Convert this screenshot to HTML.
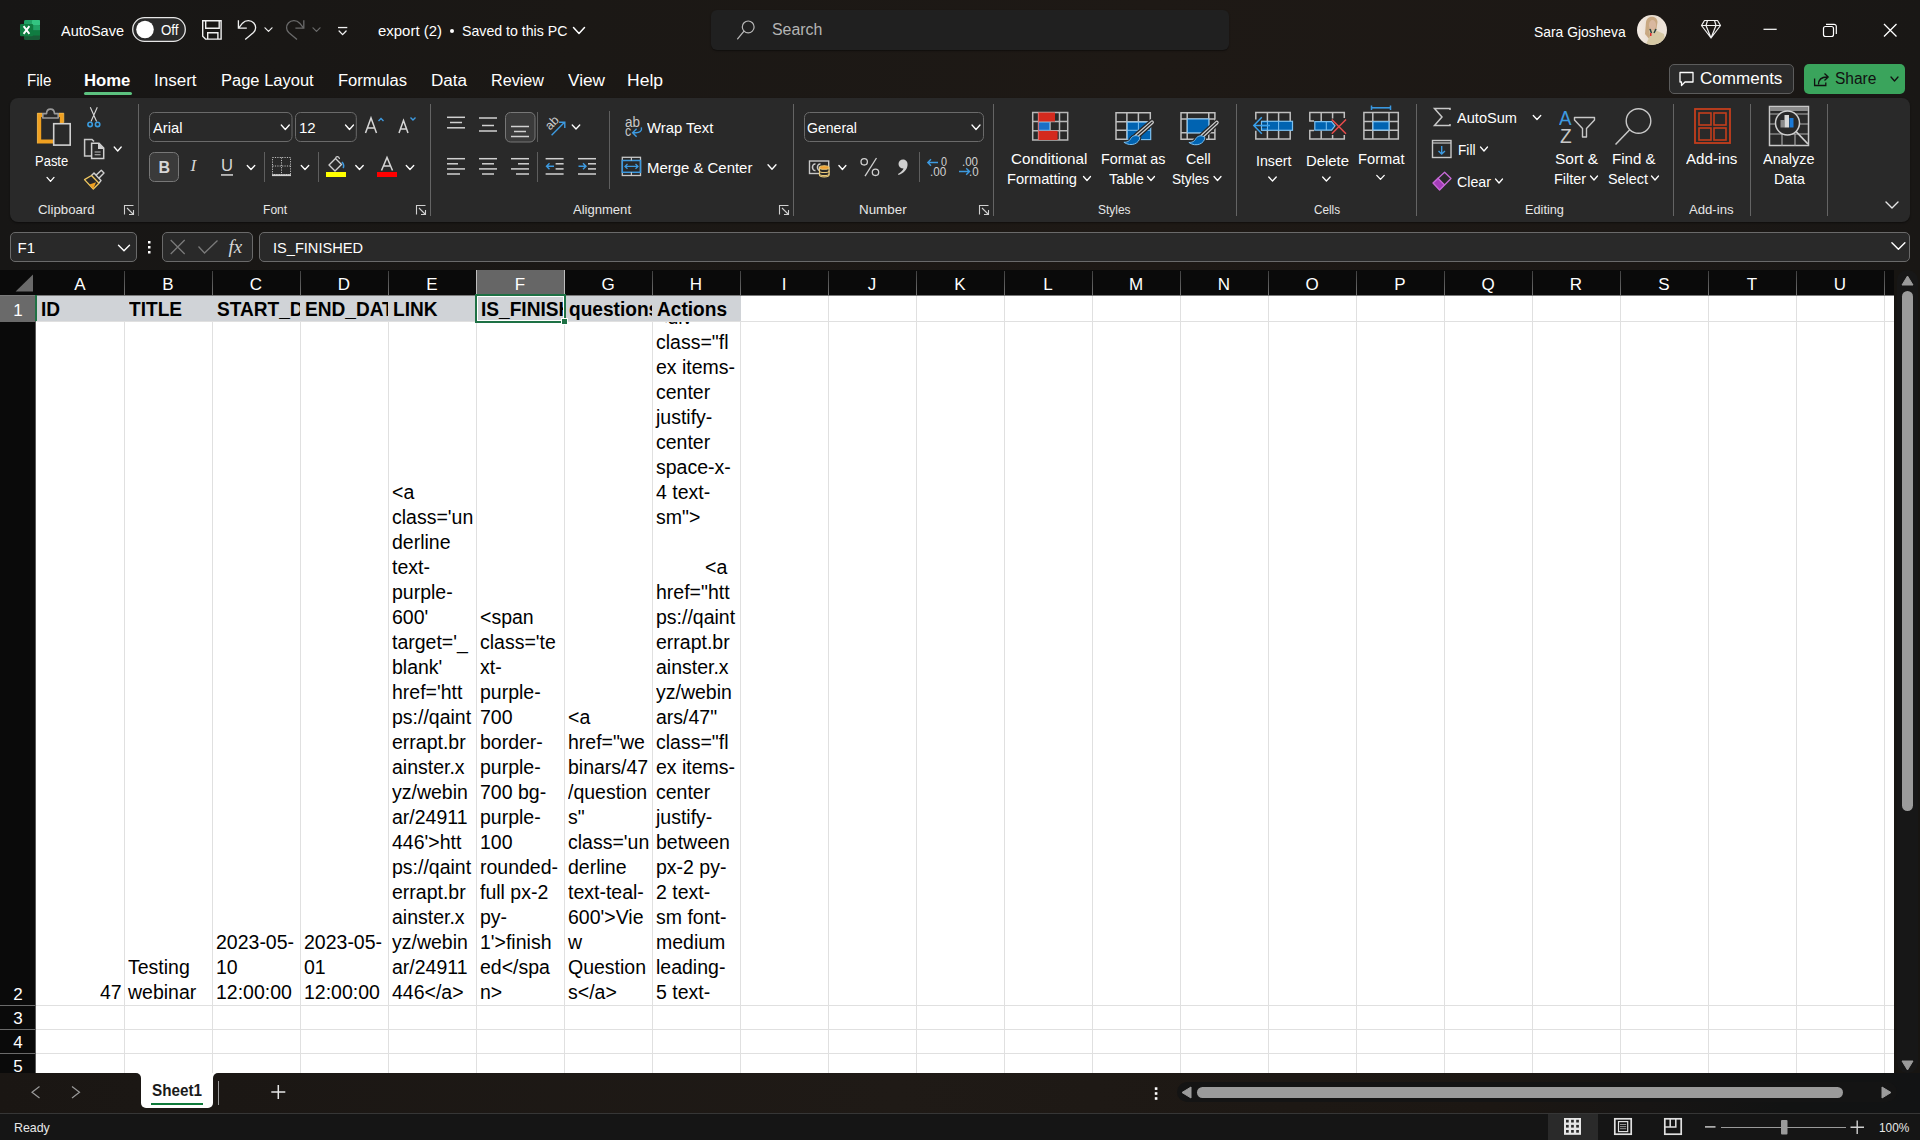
<!DOCTYPE html>
<html><head><meta charset="utf-8"><title>Excel</title><style>
*{margin:0;padding:0;box-sizing:border-box}
html,body{width:1920px;height:1140px;overflow:hidden;background:#1b1714;font-family:"Liberation Sans",sans-serif;position:relative}
.t{position:absolute;white-space:pre;line-height:1;transform-origin:0 0}
.r{position:absolute}
.s{position:absolute;overflow:visible}
</style></head><body>
<div class="r" style="left:0px;top:0px;width:1920px;height:270px;background:linear-gradient(90deg,#171615 0%,#1b1815 30%,#1e1915 60%,#1c1815 85%,#191715 100%);"></div>
<div class="r" style="left:711px;top:10px;width:518px;height:40px;background:#202020;border-radius:6px;box-shadow:0 1px 1.5px rgba(0,0,0,0.45);"></div>
<div class="r" style="left:1669px;top:64px;width:125px;height:30px;background:#2b2b2b;border:1px solid #5c5c5c;border-radius:5px;"></div>
<div class="r" style="left:1804px;top:64px;width:101px;height:30px;background:#3aa45c;border-radius:5px;"></div>
<div class="r" style="left:10px;top:98px;width:1900px;height:124px;background:#292929;border-radius:8px;box-shadow:0 1px 2px rgba(0,0,0,0.45);"></div>
<div class="r" style="left:10px;top:232px;width:127px;height:30px;background:#292929;border:1px solid #6a6a6a;border-radius:5px;"></div>
<div class="r" style="left:162px;top:232px;width:91px;height:30px;background:#292929;border:1px solid #6a6a6a;border-radius:5px;"></div>
<div class="r" style="left:259px;top:232px;width:1651px;height:30px;background:#292929;border:1px solid #6a6a6a;border-radius:5px;"></div>
<div class="r" style="left:0px;top:270px;width:1894px;height:25px;background:#0a0a0a;"></div>
<div class="r" style="left:36px;top:295px;width:1858px;height:778px;background:#ffffff;"></div>
<div class="r" style="left:0px;top:295px;width:36px;height:778px;background:#0a0a0a;"></div>
<div class="r" style="left:36px;top:295px;width:704px;height:26px;background:#d0d3d7;"></div>
<div class="r" style="left:476px;top:270px;width:88px;height:25px;background:#666666;"></div>
<div class="r" style="left:0px;top:295px;width:36px;height:26px;background:#6a6a6a;"></div>
<svg class="s" style="left:0;top:0" width="1920" height="1140"><defs><linearGradient id="hsep" x1="0" y1="0" x2="0" y2="1"><stop offset="0" stop-color="#404040"/><stop offset="1" stop-color="#707070"/></linearGradient></defs><rect x="124" y="271" width="1" height="24" fill="url(#hsep)"/><rect x="124" y="295" width="1" height="778" fill="#e0e0e0"/><rect x="212" y="271" width="1" height="24" fill="url(#hsep)"/><rect x="212" y="295" width="1" height="778" fill="#e0e0e0"/><rect x="300" y="271" width="1" height="24" fill="url(#hsep)"/><rect x="300" y="295" width="1" height="778" fill="#e0e0e0"/><rect x="388" y="271" width="1" height="24" fill="url(#hsep)"/><rect x="388" y="295" width="1" height="778" fill="#e0e0e0"/><rect x="476" y="271" width="1" height="24" fill="url(#hsep)"/><rect x="476" y="295" width="1" height="778" fill="#e0e0e0"/><rect x="564" y="271" width="1" height="24" fill="url(#hsep)"/><rect x="564" y="295" width="1" height="778" fill="#e0e0e0"/><rect x="652" y="271" width="1" height="24" fill="url(#hsep)"/><rect x="652" y="295" width="1" height="778" fill="#e0e0e0"/><rect x="740" y="271" width="1" height="24" fill="url(#hsep)"/><rect x="740" y="295" width="1" height="778" fill="#e0e0e0"/><rect x="828" y="271" width="1" height="24" fill="url(#hsep)"/><rect x="828" y="295" width="1" height="778" fill="#e0e0e0"/><rect x="916" y="271" width="1" height="24" fill="url(#hsep)"/><rect x="916" y="295" width="1" height="778" fill="#e0e0e0"/><rect x="1004" y="271" width="1" height="24" fill="url(#hsep)"/><rect x="1004" y="295" width="1" height="778" fill="#e0e0e0"/><rect x="1092" y="271" width="1" height="24" fill="url(#hsep)"/><rect x="1092" y="295" width="1" height="778" fill="#e0e0e0"/><rect x="1180" y="271" width="1" height="24" fill="url(#hsep)"/><rect x="1180" y="295" width="1" height="778" fill="#e0e0e0"/><rect x="1268" y="271" width="1" height="24" fill="url(#hsep)"/><rect x="1268" y="295" width="1" height="778" fill="#e0e0e0"/><rect x="1356" y="271" width="1" height="24" fill="url(#hsep)"/><rect x="1356" y="295" width="1" height="778" fill="#e0e0e0"/><rect x="1444" y="271" width="1" height="24" fill="url(#hsep)"/><rect x="1444" y="295" width="1" height="778" fill="#e0e0e0"/><rect x="1532" y="271" width="1" height="24" fill="url(#hsep)"/><rect x="1532" y="295" width="1" height="778" fill="#e0e0e0"/><rect x="1620" y="271" width="1" height="24" fill="url(#hsep)"/><rect x="1620" y="295" width="1" height="778" fill="#e0e0e0"/><rect x="1708" y="271" width="1" height="24" fill="url(#hsep)"/><rect x="1708" y="295" width="1" height="778" fill="#e0e0e0"/><rect x="1796" y="271" width="1" height="24" fill="url(#hsep)"/><rect x="1796" y="295" width="1" height="778" fill="#e0e0e0"/><rect x="1884" y="271" width="1" height="24" fill="url(#hsep)"/><rect x="1884" y="295" width="1" height="778" fill="#e0e0e0"/><rect x="36" y="321" width="1858" height="1" fill="#e0e0e0"/><rect x="0" y="321" width="36" height="1" fill="#6a6a6a"/><rect x="36" y="1005" width="1858" height="1" fill="#e0e0e0"/><rect x="0" y="1005" width="36" height="1" fill="#6a6a6a"/><rect x="36" y="1029" width="1858" height="1" fill="#e0e0e0"/><rect x="0" y="1029" width="36" height="1" fill="#6a6a6a"/><rect x="36" y="1053" width="1858" height="1" fill="#e0e0e0"/><rect x="0" y="1053" width="36" height="1" fill="#6a6a6a"/><rect x="35" y="295" width="1" height="778" fill="#5a5a5a"/><rect x="0" y="295" width="1894" height="1" fill="#7a7a7a"/></svg>
<div class="r" style="left:36px;top:296px;width:704.5px;height:25px;background:#d0d3d7;"></div>
<div class="t" style="left:74.33px;top:275.61px;font-size:17px;color:#ffffff;">A</div>
<div class="t" style="left:162.33px;top:275.61px;font-size:17px;color:#ffffff;">B</div>
<div class="t" style="left:249.86px;top:275.61px;font-size:17px;color:#ffffff;">C</div>
<div class="t" style="left:337.86px;top:275.61px;font-size:17px;color:#ffffff;">D</div>
<div class="t" style="left:426.33px;top:275.61px;font-size:17px;color:#ffffff;">E</div>
<div class="t" style="left:514.81px;top:275.61px;font-size:17px;color:#ffffff;">F</div>
<div class="t" style="left:601.39px;top:275.61px;font-size:17px;color:#ffffff;">G</div>
<div class="t" style="left:689.86px;top:275.61px;font-size:17px;color:#ffffff;">H</div>
<div class="t" style="left:781.64px;top:275.61px;font-size:17px;color:#ffffff;">I</div>
<div class="t" style="left:867.75px;top:275.61px;font-size:17px;color:#ffffff;">J</div>
<div class="t" style="left:954.33px;top:275.61px;font-size:17px;color:#ffffff;">K</div>
<div class="t" style="left:1043.27px;top:275.61px;font-size:17px;color:#ffffff;">L</div>
<div class="t" style="left:1128.92px;top:275.61px;font-size:17px;color:#ffffff;">M</div>
<div class="t" style="left:1217.86px;top:275.61px;font-size:17px;color:#ffffff;">N</div>
<div class="t" style="left:1305.39px;top:275.61px;font-size:17px;color:#ffffff;">O</div>
<div class="t" style="left:1394.33px;top:275.61px;font-size:17px;color:#ffffff;">P</div>
<div class="t" style="left:1481.39px;top:275.61px;font-size:17px;color:#ffffff;">Q</div>
<div class="t" style="left:1569.86px;top:275.61px;font-size:17px;color:#ffffff;">R</div>
<div class="t" style="left:1658.33px;top:275.61px;font-size:17px;color:#ffffff;">S</div>
<div class="t" style="left:1746.81px;top:275.61px;font-size:17px;color:#ffffff;">T</div>
<div class="t" style="left:1833.86px;top:275.61px;font-size:17px;color:#ffffff;">U</div>
<div class="t" style="left:13.27px;top:302.11px;font-size:17px;color:#ffffff;">1</div>
<div class="t" style="left:13.27px;top:985.61px;font-size:17px;color:#ffffff;">2</div>
<div class="t" style="left:13.27px;top:1009.61px;font-size:17px;color:#ffffff;">3</div>
<div class="t" style="left:13.27px;top:1033.61px;font-size:17px;color:#ffffff;">4</div>
<div class="t" style="left:13.27px;top:1057.61px;font-size:17px;color:#ffffff;">5</div>
<div style="position:absolute;left:37px;top:295px;width:87px;height:26px;overflow:hidden"><div class="t" style="left:3.50px;top:3.87px;font-size:20px;color:#000;font-weight:bold;transform:scaleX(0.9550);">ID</div></div>
<div style="position:absolute;left:125px;top:295px;width:87px;height:26px;overflow:hidden"><div class="t" style="left:3.50px;top:3.87px;font-size:20px;color:#000;font-weight:bold;transform:scaleX(0.9550);">TITLE</div></div>
<div style="position:absolute;left:213px;top:295px;width:87px;height:26px;overflow:hidden"><div class="t" style="left:3.50px;top:3.87px;font-size:20px;color:#000;font-weight:bold;transform:scaleX(0.9550);">START_DATE</div></div>
<div style="position:absolute;left:301px;top:295px;width:87px;height:26px;overflow:hidden"><div class="t" style="left:3.50px;top:3.87px;font-size:20px;color:#000;font-weight:bold;transform:scaleX(0.9550);">END_DATE</div></div>
<div style="position:absolute;left:389px;top:295px;width:87px;height:26px;overflow:hidden"><div class="t" style="left:3.50px;top:3.87px;font-size:20px;color:#000;font-weight:bold;transform:scaleX(0.9550);">LINK</div></div>
<div style="position:absolute;left:477px;top:295px;width:87px;height:26px;overflow:hidden"><div class="t" style="left:3.50px;top:3.87px;font-size:20px;color:#000;font-weight:bold;transform:scaleX(0.9550);">IS_FINISHED</div></div>
<div style="position:absolute;left:565px;top:295px;width:87px;height:26px;overflow:hidden"><div class="t" style="left:3.50px;top:3.87px;font-size:20px;color:#000;font-weight:bold;transform:scaleX(0.9550);">questions</div></div>
<div style="position:absolute;left:653px;top:295px;width:87px;height:26px;overflow:hidden"><div class="t" style="left:3.50px;top:3.87px;font-size:20px;color:#000;font-weight:bold;transform:scaleX(0.9550);">Actions</div></div>
<div style="position:absolute;left:37px;top:322px;width:87px;height:683px;overflow:hidden"><div class="t" style="left:62.61px;top:659.77px;font-size:20px;color:#000;transform:scaleX(0.9750);">47</div></div>
<div style="position:absolute;left:125px;top:322px;width:87px;height:683px;overflow:hidden"><div class="t" style="left:3.00px;top:634.77px;font-size:20px;color:#000;transform:scaleX(0.9750);">Testing</div><div class="t" style="left:3.00px;top:659.77px;font-size:20px;color:#000;transform:scaleX(0.9750);">webinar</div></div>
<div style="position:absolute;left:213px;top:322px;width:87px;height:683px;overflow:hidden"><div class="t" style="left:3.00px;top:609.77px;font-size:20px;color:#000;transform:scaleX(0.9750);">2023-05-</div><div class="t" style="left:3.00px;top:634.77px;font-size:20px;color:#000;transform:scaleX(0.9750);">10</div><div class="t" style="left:3.00px;top:659.77px;font-size:20px;color:#000;transform:scaleX(0.9750);">12:00:00</div></div>
<div style="position:absolute;left:301px;top:322px;width:87px;height:683px;overflow:hidden"><div class="t" style="left:3.00px;top:609.77px;font-size:20px;color:#000;transform:scaleX(0.9750);">2023-05-</div><div class="t" style="left:3.00px;top:634.77px;font-size:20px;color:#000;transform:scaleX(0.9750);">01</div><div class="t" style="left:3.00px;top:659.77px;font-size:20px;color:#000;transform:scaleX(0.9750);">12:00:00</div></div>
<div style="position:absolute;left:389px;top:322px;width:87px;height:683px;overflow:hidden"><div class="t" style="left:3.00px;top:159.77px;font-size:20px;color:#000;transform:scaleX(0.9750);">&lt;a</div><div class="t" style="left:3.00px;top:184.77px;font-size:20px;color:#000;transform:scaleX(0.9750);">class=&#x27;un</div><div class="t" style="left:3.00px;top:209.77px;font-size:20px;color:#000;transform:scaleX(0.9750);">derline</div><div class="t" style="left:3.00px;top:234.77px;font-size:20px;color:#000;transform:scaleX(0.9750);">text-</div><div class="t" style="left:3.00px;top:259.77px;font-size:20px;color:#000;transform:scaleX(0.9750);">purple-</div><div class="t" style="left:3.00px;top:284.77px;font-size:20px;color:#000;transform:scaleX(0.9750);">600&#x27;</div><div class="t" style="left:3.00px;top:309.77px;font-size:20px;color:#000;transform:scaleX(0.9750);">target=&#x27;_</div><div class="t" style="left:3.00px;top:334.77px;font-size:20px;color:#000;transform:scaleX(0.9750);">blank&#x27;</div><div class="t" style="left:3.00px;top:359.77px;font-size:20px;color:#000;transform:scaleX(0.9750);">href=&#x27;htt</div><div class="t" style="left:3.00px;top:384.77px;font-size:20px;color:#000;transform:scaleX(0.9750);">ps://qaint</div><div class="t" style="left:3.00px;top:409.77px;font-size:20px;color:#000;transform:scaleX(0.9750);">errapt.br</div><div class="t" style="left:3.00px;top:434.77px;font-size:20px;color:#000;transform:scaleX(0.9750);">ainster.x</div><div class="t" style="left:3.00px;top:459.77px;font-size:20px;color:#000;transform:scaleX(0.9750);">yz/webin</div><div class="t" style="left:3.00px;top:484.77px;font-size:20px;color:#000;transform:scaleX(0.9750);">ar/24911</div><div class="t" style="left:3.00px;top:509.77px;font-size:20px;color:#000;transform:scaleX(0.9750);">446&#x27;&gt;htt</div><div class="t" style="left:3.00px;top:534.77px;font-size:20px;color:#000;transform:scaleX(0.9750);">ps://qaint</div><div class="t" style="left:3.00px;top:559.77px;font-size:20px;color:#000;transform:scaleX(0.9750);">errapt.br</div><div class="t" style="left:3.00px;top:584.77px;font-size:20px;color:#000;transform:scaleX(0.9750);">ainster.x</div><div class="t" style="left:3.00px;top:609.77px;font-size:20px;color:#000;transform:scaleX(0.9750);">yz/webin</div><div class="t" style="left:3.00px;top:634.77px;font-size:20px;color:#000;transform:scaleX(0.9750);">ar/24911</div><div class="t" style="left:3.00px;top:659.77px;font-size:20px;color:#000;transform:scaleX(0.9750);">446&lt;/a&gt;</div></div>
<div style="position:absolute;left:477px;top:322px;width:87px;height:683px;overflow:hidden"><div class="t" style="left:3.00px;top:284.77px;font-size:20px;color:#000;transform:scaleX(0.9750);">&lt;span</div><div class="t" style="left:3.00px;top:309.77px;font-size:20px;color:#000;transform:scaleX(0.9750);">class=&#x27;te</div><div class="t" style="left:3.00px;top:334.77px;font-size:20px;color:#000;transform:scaleX(0.9750);">xt-</div><div class="t" style="left:3.00px;top:359.77px;font-size:20px;color:#000;transform:scaleX(0.9750);">purple-</div><div class="t" style="left:3.00px;top:384.77px;font-size:20px;color:#000;transform:scaleX(0.9750);">700</div><div class="t" style="left:3.00px;top:409.77px;font-size:20px;color:#000;transform:scaleX(0.9750);">border-</div><div class="t" style="left:3.00px;top:434.77px;font-size:20px;color:#000;transform:scaleX(0.9750);">purple-</div><div class="t" style="left:3.00px;top:459.77px;font-size:20px;color:#000;transform:scaleX(0.9750);">700 bg-</div><div class="t" style="left:3.00px;top:484.77px;font-size:20px;color:#000;transform:scaleX(0.9750);">purple-</div><div class="t" style="left:3.00px;top:509.77px;font-size:20px;color:#000;transform:scaleX(0.9750);">100</div><div class="t" style="left:3.00px;top:534.77px;font-size:20px;color:#000;transform:scaleX(0.9750);">rounded-</div><div class="t" style="left:3.00px;top:559.77px;font-size:20px;color:#000;transform:scaleX(0.9750);">full px-2</div><div class="t" style="left:3.00px;top:584.77px;font-size:20px;color:#000;transform:scaleX(0.9750);">py-</div><div class="t" style="left:3.00px;top:609.77px;font-size:20px;color:#000;transform:scaleX(0.9750);">1&#x27;&gt;finish</div><div class="t" style="left:3.00px;top:634.77px;font-size:20px;color:#000;transform:scaleX(0.9750);">ed&lt;/spa</div><div class="t" style="left:3.00px;top:659.77px;font-size:20px;color:#000;transform:scaleX(0.9750);">n&gt;</div></div>
<div style="position:absolute;left:565px;top:322px;width:87px;height:683px;overflow:hidden"><div class="t" style="left:3.00px;top:384.77px;font-size:20px;color:#000;transform:scaleX(0.9750);">&lt;a</div><div class="t" style="left:3.00px;top:409.77px;font-size:20px;color:#000;transform:scaleX(0.9750);">href=&quot;we</div><div class="t" style="left:3.00px;top:434.77px;font-size:20px;color:#000;transform:scaleX(0.9750);">binars/47</div><div class="t" style="left:3.00px;top:459.77px;font-size:20px;color:#000;transform:scaleX(0.9750);">/question</div><div class="t" style="left:3.00px;top:484.77px;font-size:20px;color:#000;transform:scaleX(0.9750);">s&quot;</div><div class="t" style="left:3.00px;top:509.77px;font-size:20px;color:#000;transform:scaleX(0.9750);">class=&#x27;un</div><div class="t" style="left:3.00px;top:534.77px;font-size:20px;color:#000;transform:scaleX(0.9750);">derline</div><div class="t" style="left:3.00px;top:559.77px;font-size:20px;color:#000;transform:scaleX(0.9750);">text-teal-</div><div class="t" style="left:3.00px;top:584.77px;font-size:20px;color:#000;transform:scaleX(0.9750);">600&#x27;&gt;Vie</div><div class="t" style="left:3.00px;top:609.77px;font-size:20px;color:#000;transform:scaleX(0.9750);">w</div><div class="t" style="left:3.00px;top:634.77px;font-size:20px;color:#000;transform:scaleX(0.9750);">Question</div><div class="t" style="left:3.00px;top:659.77px;font-size:20px;color:#000;transform:scaleX(0.9750);">s&lt;/a&gt;</div></div>
<div style="position:absolute;left:653px;top:322px;width:87px;height:683px;overflow:hidden"><div class="t" style="left:3.00px;top:-15.23px;font-size:20px;color:#000;transform:scaleX(0.9750);">&lt;div</div><div class="t" style="left:3.00px;top:9.77px;font-size:20px;color:#000;transform:scaleX(0.9750);">class=&quot;fl</div><div class="t" style="left:3.00px;top:34.77px;font-size:20px;color:#000;transform:scaleX(0.9750);">ex items-</div><div class="t" style="left:3.00px;top:59.77px;font-size:20px;color:#000;transform:scaleX(0.9750);">center</div><div class="t" style="left:3.00px;top:84.77px;font-size:20px;color:#000;transform:scaleX(0.9750);">justify-</div><div class="t" style="left:3.00px;top:109.77px;font-size:20px;color:#000;transform:scaleX(0.9750);">center</div><div class="t" style="left:3.00px;top:134.77px;font-size:20px;color:#000;transform:scaleX(0.9750);">space-x-</div><div class="t" style="left:3.00px;top:159.77px;font-size:20px;color:#000;transform:scaleX(0.9750);">4 text-</div><div class="t" style="left:3.00px;top:184.77px;font-size:20px;color:#000;transform:scaleX(0.9750);">sm&quot;&gt;</div><div class="t" style="left:52.00px;top:234.77px;font-size:20px;color:#000;transform:scaleX(0.9750);">&lt;a</div><div class="t" style="left:3.00px;top:259.77px;font-size:20px;color:#000;transform:scaleX(0.9750);">href=&quot;htt</div><div class="t" style="left:3.00px;top:284.77px;font-size:20px;color:#000;transform:scaleX(0.9750);">ps://qaint</div><div class="t" style="left:3.00px;top:309.77px;font-size:20px;color:#000;transform:scaleX(0.9750);">errapt.br</div><div class="t" style="left:3.00px;top:334.77px;font-size:20px;color:#000;transform:scaleX(0.9750);">ainster.x</div><div class="t" style="left:3.00px;top:359.77px;font-size:20px;color:#000;transform:scaleX(0.9750);">yz/webin</div><div class="t" style="left:3.00px;top:384.77px;font-size:20px;color:#000;transform:scaleX(0.9750);">ars/47&quot;</div><div class="t" style="left:3.00px;top:409.77px;font-size:20px;color:#000;transform:scaleX(0.9750);">class=&quot;fl</div><div class="t" style="left:3.00px;top:434.77px;font-size:20px;color:#000;transform:scaleX(0.9750);">ex items-</div><div class="t" style="left:3.00px;top:459.77px;font-size:20px;color:#000;transform:scaleX(0.9750);">center</div><div class="t" style="left:3.00px;top:484.77px;font-size:20px;color:#000;transform:scaleX(0.9750);">justify-</div><div class="t" style="left:3.00px;top:509.77px;font-size:20px;color:#000;transform:scaleX(0.9750);">between</div><div class="t" style="left:3.00px;top:534.77px;font-size:20px;color:#000;transform:scaleX(0.9750);">px-2 py-</div><div class="t" style="left:3.00px;top:559.77px;font-size:20px;color:#000;transform:scaleX(0.9750);">2 text-</div><div class="t" style="left:3.00px;top:584.77px;font-size:20px;color:#000;transform:scaleX(0.9750);">sm font-</div><div class="t" style="left:3.00px;top:609.77px;font-size:20px;color:#000;transform:scaleX(0.9750);">medium</div><div class="t" style="left:3.00px;top:634.77px;font-size:20px;color:#000;transform:scaleX(0.9750);">leading-</div><div class="t" style="left:3.00px;top:659.77px;font-size:20px;color:#000;transform:scaleX(0.9750);">5 text-</div></div>
<div class="r" style="left:476px;top:270px;width:1px;height:25px;background:#bdbdbd;"></div>
<div class="r" style="left:564px;top:270px;width:1px;height:25px;background:#bdbdbd;"></div>
<div class="r" style="left:477px;top:296px;width:87px;height:24.5px;background:transparent;border:1px solid #ffffff;"></div>
<div class="r" style="left:475px;top:294px;width:91px;height:28.5px;background:transparent;border:2px solid #1e7145;"></div>
<div class="r" style="left:561px;top:318px;width:7px;height:7px;background:#ffffff;"></div>
<div class="r" style="left:562px;top:319px;width:5px;height:5px;background:#1e7145;"></div>
<div class="r" style="left:35px;top:295px;width:2px;height:26px;background:#1f7244;"></div>
<div class="r" style="left:1894px;top:270px;width:26px;height:803px;background:#171512;"></div>
<div class="r" style="left:1897px;top:270px;width:21px;height:803px;background:#171717;border-radius:10px;"></div>
<div class="r" style="left:1902px;top:291px;width:11px;height:520px;background:#9b9b9b;border-radius:6px;"></div>
<div class="r" style="left:130px;top:1073px;width:95px;height:12px;background:#ffffff;"></div>
<div class="r" style="left:0px;top:1073px;width:141px;height:40px;background:linear-gradient(90deg,#1a1613,#1b1714);border-top-right-radius:5px;"></div>
<div class="r" style="left:213px;top:1073px;width:1707px;height:40px;background:linear-gradient(90deg,#1b1714 0%,#1f1a16 40%,#1c1713 75%,#171514 84%,#121313 92%,#121314 100%);border-top-left-radius:5px;"></div>
<div class="r" style="left:141px;top:1085px;width:72px;height:28px;background:#1b1714;"></div>
<div class="r" style="left:141px;top:1073px;width:72px;height:35px;background:#ffffff;border-radius:0 0 5px 5px;"></div>
<div class="r" style="left:151px;top:1102.8px;width:52px;height:2.2px;background:#0e7a3a;"></div>
<div class="t" style="left:151.60px;top:1082.21px;font-size:17px;color:#1a1a1a;font-weight:bold;transform:scaleX(0.8968);">Sheet1</div>
<div class="r" style="left:218px;top:1081px;width:1.2px;height:24px;background:#9a9a9a;"></div>
<div class="r" style="left:1177px;top:1082px;width:720px;height:20px;background:#141414;border-radius:10px;"></div>
<div class="r" style="left:1197px;top:1087px;width:646px;height:11px;background:#9b9b9b;border-radius:6px;"></div>
<div class="r" style="left:0px;top:1113px;width:1920px;height:27px;background:#151515;border-top:1px solid #363636;"></div>
<div class="r" style="left:1548px;top:1114px;width:50px;height:26px;background:#2a2a2a;"></div>
<div class="t" style="left:14.20px;top:1121.00px;font-size:13px;color:#e8e8e8;transform:scaleX(0.9527);">Ready</div>
<div class="t" style="left:1879.00px;top:1121.40px;font-size:13px;color:#e8e8e8;transform:scaleX(0.9113);">100%</div>
<div class="t" style="left:61.00px;top:23.30px;font-size:15px;color:#fff;transform:scaleX(0.9685);">AutoSave</div>
<div class="t" style="left:378.00px;top:23.30px;font-size:15px;color:#fff;transform:scaleX(0.9970);">export (2)</div>
<div class="r" style="left:449.8px;top:29.3px;width:4px;height:4px;background:#fff;border-radius:50%;"></div>
<div class="t" style="left:461.60px;top:23.30px;font-size:15px;color:#fff;transform:scaleX(0.9434);">Saved to this PC</div>
<div class="t" style="left:772.30px;top:22.16px;font-size:16px;color:#b4b4b4;transform:scaleX(0.9941);">Search</div>
<div class="t" style="left:1533.50px;top:23.80px;font-size:15px;color:#fff;transform:scaleX(0.9242);">Sara Gjosheva</div>
<div class="t" style="left:27.20px;top:73.46px;font-size:16px;color:#fff;transform:scaleX(0.9464);">File</div>
<div class="t" style="left:84.40px;top:73.46px;font-size:16px;color:#fff;font-weight:bold;transform:scaleX(1.0438);">Home</div>
<div class="t" style="left:154.00px;top:73.46px;font-size:16px;color:#fff;transform:scaleX(1.0646);">Insert</div>
<div class="t" style="left:221.00px;top:73.46px;font-size:16px;color:#fff;transform:scaleX(1.0317);">Page Layout</div>
<div class="t" style="left:338.00px;top:73.46px;font-size:16px;color:#fff;transform:scaleX(1.0348);">Formulas</div>
<div class="t" style="left:431.00px;top:73.46px;font-size:16px;color:#fff;transform:scaleX(1.0652);">Data</div>
<div class="t" style="left:491.00px;top:73.46px;font-size:16px;color:#fff;transform:scaleX(1.0102);">Review</div>
<div class="t" style="left:568.00px;top:73.46px;font-size:16px;color:#fff;transform:scaleX(1.0758);">View</div>
<div class="t" style="left:627.00px;top:73.46px;font-size:16px;color:#fff;transform:scaleX(1.0940);">Help</div>
<div class="r" style="left:84px;top:92px;width:48px;height:3px;background:#5cc27f;border-radius:2px;"></div>
<div class="t" style="left:1699.60px;top:71.26px;font-size:16px;color:#fff;transform:scaleX(1.0652);">Comments</div>
<div class="t" style="left:1834.60px;top:71.06px;font-size:16px;color:#111111;transform:scaleX(0.9696);">Share</div>
<div class="t" style="left:37.70px;top:202.80px;font-size:13px;color:#e6e6e6;transform:scaleX(1.0171);">Clipboard</div>
<div class="t" style="left:262.70px;top:202.80px;font-size:13px;color:#e6e6e6;transform:scaleX(0.9303);">Font</div>
<div class="t" style="left:573.00px;top:202.80px;font-size:13px;color:#e6e6e6;transform:scaleX(1.0033);">Alignment</div>
<div class="t" style="left:859.30px;top:202.80px;font-size:13px;color:#e6e6e6;transform:scaleX(1.0294);">Number</div>
<div class="t" style="left:1097.90px;top:202.80px;font-size:13px;color:#e6e6e6;transform:scaleX(0.9180);">Styles</div>
<div class="t" style="left:1313.60px;top:202.80px;font-size:13px;color:#e6e6e6;transform:scaleX(0.9033);">Cells</div>
<div class="t" style="left:1525.40px;top:202.80px;font-size:13px;color:#e6e6e6;transform:scaleX(0.9786);">Editing</div>
<div class="t" style="left:1689.30px;top:202.80px;font-size:13px;color:#e6e6e6;transform:scaleX(1.0095);">Add-ins</div>
<div class="t" style="left:34.50px;top:154.15px;font-size:14px;color:#fff;transform:scaleX(0.9274);">Paste</div>
<div class="t" style="left:152.50px;top:120.30px;font-size:15px;color:#fff;transform:scaleX(0.9830);">Arial</div>
<div class="t" style="left:299.00px;top:120.30px;font-size:15px;color:#fff;">12</div>
<div class="t" style="left:647.30px;top:120.00px;font-size:15px;color:#fff;transform:scaleX(0.9899);">Wrap Text</div>
<div class="t" style="left:647.30px;top:160.30px;font-size:15px;color:#fff;transform:scaleX(0.9954);">Merge &amp; Center</div>
<div class="t" style="left:807.00px;top:119.90px;font-size:15px;color:#fff;transform:scaleX(0.9369);">General</div>
<div class="t" style="left:1011.00px;top:151.10px;font-size:15px;color:#fff;transform:scaleX(1.0179);">Conditional</div>
<div class="t" style="left:1006.50px;top:170.90px;font-size:15px;color:#fff;transform:scaleX(0.9764);">Formatting</div>
<div class="t" style="left:1100.50px;top:151.10px;font-size:15px;color:#fff;transform:scaleX(0.9553);">Format as</div>
<div class="t" style="left:1109.00px;top:170.90px;font-size:15px;color:#fff;transform:scaleX(0.9760);">Table</div>
<div class="t" style="left:1185.80px;top:151.10px;font-size:15px;color:#fff;transform:scaleX(0.9558);">Cell</div>
<div class="t" style="left:1172.00px;top:170.90px;font-size:15px;color:#fff;transform:scaleX(0.9058);">Styles</div>
<div class="t" style="left:1255.50px;top:153.30px;font-size:15px;color:#fff;transform:scaleX(0.9463);">Insert</div>
<div class="t" style="left:1305.70px;top:153.30px;font-size:15px;color:#fff;transform:scaleX(0.9917);">Delete</div>
<div class="t" style="left:1357.70px;top:151.10px;font-size:15px;color:#fff;transform:scaleX(0.9788);">Format</div>
<div class="t" style="left:1457.00px;top:110.10px;font-size:15px;color:#fff;transform:scaleX(0.9724);">AutoSum</div>
<div class="t" style="left:1457.50px;top:141.90px;font-size:15px;color:#fff;transform:scaleX(0.9133);">Fill</div>
<div class="t" style="left:1457.00px;top:173.60px;font-size:15px;color:#fff;transform:scaleX(0.9485);">Clear</div>
<div class="t" style="left:1555.00px;top:150.90px;font-size:15px;color:#fff;transform:scaleX(1.0316);">Sort &amp;</div>
<div class="t" style="left:1553.70px;top:170.90px;font-size:15px;color:#fff;transform:scaleX(0.9600);">Filter</div>
<div class="t" style="left:1612.40px;top:150.90px;font-size:15px;color:#fff;transform:scaleX(1.0034);">Find &amp;</div>
<div class="t" style="left:1607.50px;top:170.90px;font-size:15px;color:#fff;transform:scaleX(0.9594);">Select</div>
<div class="t" style="left:1686.30px;top:151.10px;font-size:15px;color:#fff;transform:scaleX(1.0106);">Add-ins</div>
<div class="t" style="left:1763.00px;top:151.10px;font-size:15px;color:#fff;transform:scaleX(0.9650);">Analyze</div>
<div class="t" style="left:1773.50px;top:170.70px;font-size:15px;color:#fff;transform:scaleX(0.9784);">Data</div>
<div class="t" style="left:17.50px;top:239.60px;font-size:15px;color:#fff;">F1</div>
<div class="t" style="left:273.00px;top:239.60px;font-size:15px;color:#fff;transform:scaleX(0.9727);">IS_FINISHED</div>
<svg class="s" style="left:0;top:0" width="1920" height="1140"><rect x="24" y="20" width="16" height="20" rx="1.5" fill="#185c37"/><rect x="24" y="20" width="16" height="5.5" rx="1.5" fill="#21a366"/><rect x="32" y="20" width="8" height="5.5" rx="1" fill="#33c481"/><rect x="24" y="25.5" width="16" height="5" fill="#21a366"/><rect x="24" y="30.5" width="16" height="5" fill="#107c41"/><rect x="20" y="24" width="13.2" height="12.2" rx="1.2" fill="#107c41"/><path d="M23.6 26.2 L29.4 33.8 M29.4 26.2 L23.6 33.8" stroke="#fff" stroke-width="1.9"/><rect x="132.7" y="17.7" width="52.6" height="23.6" rx="11.8" fill="#2a2a2a" stroke="#e6e6e6" stroke-width="1.3"/><circle cx="145" cy="29.5" r="8.8" fill="#fff"/><path d="M202.7 20.7 H221.1 V39.1 H205.5 L202.7 36.3 Z" fill="none" stroke="#f0f0f0" stroke-width="1.4"/><path d="M205.7 20.7 V28.2 H219.2 V20.7" fill="none" stroke="#f0f0f0" stroke-width="1.4"/><path d="M207.7 39.1 V32.7 H217.9 V39.1" fill="none" stroke="#f0f0f0" stroke-width="1.4"/><path d="M238.4 20.3 V28.2 H246.8" fill="none" stroke="#f0f0f0" stroke-width="1.3"/><path d="M238.8 27.8 L242.5 23.2 C245.5 19.8 251 19.8 253.8 23 C256.5 26 256 30 253.5 32.5 L245.2 39.6" fill="none" stroke="#f0f0f0" stroke-width="1.3"/><path d="M265.00 27.80 L268.50 31.40 L272.00 27.80" fill="none" stroke="#f0f0f0" stroke-width="1.2" stroke-linecap="round" stroke-linejoin="round"/><path d="M303.8 20.3 V28.2 H295.4" fill="none" stroke="#6a6a6a" stroke-width="1.3"/><path d="M303.4 27.8 L299.7 23.2 C296.7 19.8 291.2 19.8 288.4 23 C285.7 26 286.2 30 288.7 32.5 L297 39.6" fill="none" stroke="#6a6a6a" stroke-width="1.3"/><path d="M313.00 27.80 L316.50 31.40 L320.00 27.80" fill="none" stroke="#6a6a6a" stroke-width="1.2" stroke-linecap="round" stroke-linejoin="round"/><rect x="338" y="26.9" width="9.3" height="1.3" fill="#f0f0f0"/><path d="M339.10 31.00 L342.60 34.60 L346.10 31.00" fill="none" stroke="#f0f0f0" stroke-width="1.3" stroke-linecap="round" stroke-linejoin="round"/><path d="M573.50 27.50 L579.00 33.50 L584.50 27.50" fill="none" stroke="#fff" stroke-width="1.5" stroke-linecap="round" stroke-linejoin="round"/><circle cx="748.2" cy="26.9" r="5.9" fill="none" stroke="#b8b8b8" stroke-width="1.2"/><path d="M744 31.2 L737.6 38.8" stroke="#b8b8b8" stroke-width="1.3" stroke-linecap="round"/><defs><clipPath id="avc"><circle cx="1652" cy="30" r="15"/></clipPath><linearGradient id="avg" x1="0" y1="0" x2="1" y2="0"><stop offset="0" stop-color="#f4ece6"/><stop offset="0.5" stop-color="#e8dccf"/><stop offset="1" stop-color="#efe6dc"/></linearGradient></defs><g clip-path="url(#avc)"><rect x="1636" y="14" width="32" height="32" fill="url(#avg)"/><path d="M1646 22 C1647 15 1657 15 1657.5 22 L1656 32 L1650 40 L1645 34 Z" fill="#c8a882"/><ellipse cx="1652.5" cy="25" rx="3.5" ry="5" fill="#d9b8a0"/><path d="M1649 30 L1655 30 L1664 34 L1666 46 L1645 46 L1650 36 Z" fill="#d6c8a4"/><path d="M1650 29 L1651.5 33 M1656 29 L1654 33" stroke="#2a4040" stroke-width="1.5"/><rect x="1650" y="33" width="1.5" height="3" fill="#e03030"/></g><path d="M1704.5 20.5 H1717.5 L1720.5 25.5 L1711 38 L1701.5 25.5 Z M1701.5 25.5 H1720.5 M1707.5 20.5 L1706 25.5 L1711 38 L1716 25.5 L1714.5 20.5" fill="none" stroke="#f0f0f0" stroke-width="1.2" stroke-linejoin="round"/><rect x="1763.5" y="28.7" width="13.2" height="1.2" fill="#fff"/><rect x="1823.5" y="26.5" width="10" height="10" rx="2" fill="none" stroke="#fff" stroke-width="1.2"/><path d="M1826 24.3 H1834 A2.2 2.2 0 0 1 1836.3 26.5 V34" fill="none" stroke="#fff" stroke-width="1.2"/><path d="M1884 24 L1896.5 36.5 M1896.5 24 L1884 36.5" stroke="#fff" stroke-width="1.3"/><path d="M1680 72.5 H1693 V82 H1685 L1681.5 85.5 V82 H1680 Z" fill="none" stroke="#fff" stroke-width="1.3" stroke-linejoin="round"/><path d="M1814.6 78.5 V85.5 H1825.8 V82.5" fill="none" stroke="#111" stroke-width="1.3"/><path d="M1818.5 84.5 C1818.5 79 1822 77 1827 77 M1824.5 73.5 L1828.2 77 L1824.5 80.5" fill="none" stroke="#111" stroke-width="1.3" stroke-linejoin="round"/><path d="M1891.00 77.00 L1894.50 81.00 L1898.00 77.00" fill="none" stroke="#111" stroke-width="1.3" stroke-linecap="round" stroke-linejoin="round"/><rect x="138" y="104" width="1" height="112" fill="#646464"/><rect x="430" y="104" width="1" height="112" fill="#646464"/><rect x="793" y="104" width="1" height="112" fill="#646464"/><rect x="993" y="104" width="1" height="112" fill="#646464"/><rect x="1236" y="104" width="1" height="112" fill="#646464"/><rect x="1416" y="104" width="1" height="112" fill="#646464"/><rect x="1673" y="104" width="1" height="112" fill="#646464"/><rect x="1750" y="104" width="1" height="112" fill="#646464"/><rect x="1827" y="104" width="1" height="112" fill="#646464"/><rect x="264" y="152" width="1" height="30" fill="#5e5e5e"/><rect x="318" y="152" width="1" height="30" fill="#5e5e5e"/><rect x="537" y="112" width="1" height="30" fill="#5e5e5e"/><rect x="537" y="152" width="1" height="30" fill="#5e5e5e"/><rect x="609" y="111" width="1" height="78" fill="#5e5e5e"/><rect x="919" y="152" width="1" height="30" fill="#5e5e5e"/><path d="M124.5 214.5 V205.5 H133.5" fill="none" stroke="#d0d0d0" stroke-width="1.1"/><path d="M127 208 L133.5 214.5 M133.5 210 V214.5 H129" fill="none" stroke="#d0d0d0" stroke-width="1.1"/><path d="M416.5 214.5 V205.5 H425.5" fill="none" stroke="#d0d0d0" stroke-width="1.1"/><path d="M419 208 L425.5 214.5 M425.5 210 V214.5 H421" fill="none" stroke="#d0d0d0" stroke-width="1.1"/><path d="M779.5 214.5 V205.5 H788.5" fill="none" stroke="#d0d0d0" stroke-width="1.1"/><path d="M782 208 L788.5 214.5 M788.5 210 V214.5 H784" fill="none" stroke="#d0d0d0" stroke-width="1.1"/><path d="M979.5 214.5 V205.5 H988.5" fill="none" stroke="#d0d0d0" stroke-width="1.1"/><path d="M982 208 L988.5 214.5 M988.5 210 V214.5 H984" fill="none" stroke="#d0d0d0" stroke-width="1.1"/><path d="M1886.00 202.00 L1892.00 208.00 L1898.00 202.00" fill="none" stroke="#e6e6e6" stroke-width="1.4" stroke-linecap="round" stroke-linejoin="round"/><path d="M53 141.5 H39.2 V115 H43 M58 115 H61.8 V123" fill="none" stroke="#f0a020" stroke-width="4"/><path d="M37.4 143.3 V113.2 H42.5 M58.8 113.2 H63.8 V122.5" fill="none" stroke="#f8c860" stroke-width="0.8" opacity="0.8"/><path d="M42.8 118 V113.6 H46.6 C46.6 107.6 54.4 107.6 54.4 113.6 H58.2 V118 Z" fill="#292929" stroke="#9a9a9a" stroke-width="1.6" stroke-linejoin="round"/><rect x="53.7" y="123.7" width="16.5" height="21.4" fill="#292929" stroke="#d0d0d0" stroke-width="1.6"/><path d="M47.00 177.40 L50.50 181.40 L54.00 177.40" fill="none" stroke="#fff" stroke-width="1.3" stroke-linecap="round" stroke-linejoin="round"/><path d="M90.3 107.2 L96.6 121.5 M97.3 107.2 L91 121.5" stroke="#d8d8d8" stroke-width="1.1"/><circle cx="90.1" cy="124.4" r="2.2" fill="none" stroke="#3a9de0" stroke-width="1.6"/><circle cx="97.6" cy="124.4" r="2.2" fill="none" stroke="#3a9de0" stroke-width="1.6"/><path d="M91 156 H84.6 V139.5 H92 L94 141.6" fill="none" stroke="#c8c8c8" stroke-width="1.5"/><path d="M91.6 143.2 H99 L103.7 148 V158.4 H91.6 Z" fill="#292929" stroke="#d0d0d0" stroke-width="1.5"/><path d="M98.6 143.2 V148.3 H103.7" fill="#d0d0d0" stroke="#d0d0d0" stroke-width="1.2"/><path d="M94.6 152 H100.6 M94.6 154.7 H100.6" stroke="#bdbdbd" stroke-width="1.1"/><path d="M114.20 147.00 L117.70 151.00 L121.20 147.00" fill="none" stroke="#fff" stroke-width="1.3" stroke-linecap="round" stroke-linejoin="round"/><path d="M84.5 179.6 L91.5 175.5 L99 183.2 L93.3 189 Z" fill="none" stroke="#f0c860" stroke-width="1.3" stroke-linejoin="round"/><path d="M89.5 184.6 L96 182.2 L93.3 189 Z" fill="#f0a020"/><path d="M91.5 175.5 L94 173 L101 180.5 L99 183.2" fill="none" stroke="#d0d0d0" stroke-width="1.4" stroke-linejoin="round"/><path d="M96 175.2 L101.3 170.2 L104 173 L98.8 178.2" fill="none" stroke="#d0d0d0" stroke-width="1.4" stroke-linejoin="round"/><rect x="149.5" y="112.5" width="142.5" height="29" rx="5" fill="none" stroke="#6a6a6a" stroke-width="1"/><rect x="295.5" y="112.5" width="60.8" height="29" rx="5" fill="none" stroke="#6a6a6a" stroke-width="1"/><path d="M281.30 125.05 L285.30 129.55 L289.30 125.05" fill="none" stroke="#fff" stroke-width="1.3" stroke-linecap="round" stroke-linejoin="round"/><path d="M345.50 125.05 L349.50 129.55 L353.50 125.05" fill="none" stroke="#fff" stroke-width="1.3" stroke-linecap="round" stroke-linejoin="round"/><path d="M365.5 133 L371 118 L376.5 133 M367.5 128 H374.5" fill="none" stroke="#d6d6d6" stroke-width="1.5"/><path d="M378.5 121 L381 118.5 L383.5 121" fill="none" stroke="#3d9ae0" stroke-width="1.4"/><path d="M399 133 L403.5 120.5 L408 133 M400.8 129 H406.2" fill="none" stroke="#d6d6d6" stroke-width="1.5"/><path d="M410.5 117.5 L413 120 L415.5 117.5" fill="none" stroke="#3d9ae0" stroke-width="1.4"/><rect x="149.5" y="152.5" width="29" height="29" rx="5" fill="#3a3a3a" stroke="#777" stroke-width="1"/><rect x="221" y="174.2" width="12" height="1.5" fill="#d6d6d6"/><path d="M247.25 165.50 L251.00 169.50 L254.75 165.50" fill="none" stroke="#fff" stroke-width="1.3" stroke-linecap="round" stroke-linejoin="round"/><rect x="272.5" y="157.5" width="18" height="17" fill="none" stroke="#bdbdbd" stroke-width="1" stroke-dasharray="1.2 1.2"/><path d="M281.5 157.5 V174.5 M272.5 166 H290.5" stroke="#bdbdbd" stroke-width="1" stroke-dasharray="1.2 1.2"/><rect x="272" y="174.3" width="19" height="1.8" fill="#d0d0d0"/><path d="M301.25 165.50 L305.00 169.50 L308.75 165.50" fill="none" stroke="#fff" stroke-width="1.3" stroke-linecap="round" stroke-linejoin="round"/><path d="M329 165 L335.5 158.5 L341.5 164.5 L335 171 Z" fill="none" stroke="#d0d0d0" stroke-width="1.4" stroke-linejoin="round"/><path d="M335.5 158.5 C336 156 339 156 339.5 159" fill="none" stroke="#d0d0d0" stroke-width="1.2"/><path d="M342 162 C344 164 344 167 343 168" fill="none" stroke="#3d9ae0" stroke-width="1.6"/><rect x="326" y="172" width="20" height="5" fill="#ffff00"/><path d="M355.75 165.50 L359.50 169.50 L363.25 165.50" fill="none" stroke="#fff" stroke-width="1.3" stroke-linecap="round" stroke-linejoin="round"/><path d="M381.5 170.5 L387 157.5 L392.5 170.5 M383.5 166 H390.5" fill="none" stroke="#d6d6d6" stroke-width="1.5"/><rect x="377" y="172" width="20" height="5" fill="#ff0000"/><path d="M406.25 165.50 L410.00 169.50 L413.75 165.50" fill="none" stroke="#fff" stroke-width="1.3" stroke-linecap="round" stroke-linejoin="round"/><rect x="447" y="116.55" width="18" height="1.5" fill="#d0d0d0"/><rect x="450" y="121.75" width="12" height="1.5" fill="#d0d0d0"/><rect x="447" y="127.05" width="18" height="1.5" fill="#d0d0d0"/><rect x="479" y="117.25" width="18" height="1.5" fill="#d0d0d0"/><rect x="482" y="124.75" width="12" height="1.5" fill="#d0d0d0"/><rect x="479" y="130.25" width="18" height="1.5" fill="#d0d0d0"/><rect x="505.5" y="112.5" width="29.5" height="29.5" rx="5" fill="#3a3a3a" stroke="#777" stroke-width="1"/><rect x="511" y="125.75" width="18" height="1.5" fill="#d0d0d0"/><rect x="514" y="130.75" width="12" height="1.5" fill="#d0d0d0"/><rect x="511" y="135.75" width="18" height="1.5" fill="#d0d0d0"/><rect x="447" y="157.95" width="18" height="1.5" fill="#d0d0d0"/><rect x="447" y="163.05" width="11" height="1.5" fill="#d0d0d0"/><rect x="447" y="168.15" width="18" height="1.5" fill="#d0d0d0"/><rect x="447" y="173.25" width="13" height="1.5" fill="#d0d0d0"/><rect x="479" y="157.95" width="18" height="1.5" fill="#d0d0d0"/><rect x="482" y="163.05" width="12" height="1.5" fill="#d0d0d0"/><rect x="479" y="168.15" width="18" height="1.5" fill="#d0d0d0"/><rect x="482" y="173.25" width="12" height="1.5" fill="#d0d0d0"/><rect x="511" y="157.95" width="18" height="1.5" fill="#d0d0d0"/><rect x="518" y="163.05" width="11" height="1.5" fill="#d0d0d0"/><rect x="511" y="168.15" width="18" height="1.5" fill="#d0d0d0"/><rect x="516" y="173.25" width="13" height="1.5" fill="#d0d0d0"/><rect x="545.6" y="157.95" width="18" height="1.5" fill="#d0d0d0"/><rect x="555.6" y="163.05" width="8" height="1.5" fill="#d0d0d0"/><rect x="555.6" y="168.15" width="8" height="1.5" fill="#d0d0d0"/><rect x="545.6" y="173.25" width="18" height="1.5" fill="#d0d0d0"/><path d="M554 166.3 H546.5 M549.5 163.3 L546.5 166.3 L549.5 169.3" fill="none" stroke="#3d9ae0" stroke-width="1.4"/><rect x="578" y="157.95" width="18" height="1.5" fill="#d0d0d0"/><rect x="588" y="163.05" width="8" height="1.5" fill="#d0d0d0"/><rect x="588" y="168.15" width="8" height="1.5" fill="#d0d0d0"/><rect x="578" y="173.25" width="18" height="1.5" fill="#d0d0d0"/><path d="M578.5 166.3 H586 M583 163.3 L586 166.3 L583 169.3" fill="none" stroke="#3d9ae0" stroke-width="1.4"/><path d="M551.6 135.2 L564.5 122.3 M559 122.3 H564.8 V128" fill="none" stroke="#3d9ae0" stroke-width="1.4"/><path d="M572.25 125.00 L576.00 129.00 L579.75 125.00" fill="none" stroke="#fff" stroke-width="1.3" stroke-linecap="round" stroke-linejoin="round"/><path d="M641.4 127.3 C642.2 131 639.5 133 635.5 132.8 H632.8 M636.6 128.8 L632.6 132.8 L636.6 136.8" fill="none" stroke="#3d9ae0" stroke-width="1.4"/><rect x="622.3" y="157.3" width="18.2" height="18.2" fill="none" stroke="#c8c8c8" stroke-width="1.3"/><rect x="622.3" y="160.5" width="18.2" height="11.8" fill="none" stroke="#3d9ae0" stroke-width="1.5"/><path d="M631.4 157.3 V160.5 M631.4 172.3 V175.5" stroke="#c8c8c8" stroke-width="1.2"/><path d="M625 166.4 H638 M627.5 164 L625 166.4 L627.5 168.8 M635.5 164 L638 166.4 L635.5 168.8" fill="none" stroke="#3d9ae0" stroke-width="1.3"/><path d="M768.00 164.75 L772.00 169.25 L776.00 164.75" fill="none" stroke="#fff" stroke-width="1.3" stroke-linecap="round" stroke-linejoin="round"/><rect x="804.5" y="112.5" width="179" height="29" rx="5" fill="none" stroke="#6a6a6a" stroke-width="1"/><path d="M972.00 125.05 L976.00 129.55 L980.00 125.05" fill="none" stroke="#fff" stroke-width="1.3" stroke-linecap="round" stroke-linejoin="round"/><rect x="809.5" y="161" width="19.2" height="12.5" fill="none" stroke="#c8c8c8" stroke-width="1.4"/><path d="M815.5 164 C811.5 163.5 811.5 171 815.5 170.5 M820.5 164 C816.5 163.5 816.5 171 820.5 170.5" fill="none" stroke="#c8c8c8" stroke-width="1.6"/><path d="M819.5 167.5 V175 C819.5 177.5 829 177.5 829 175 V167.5" fill="#292929" stroke="#e8c878" stroke-width="1.2"/><ellipse cx="824.25" cy="167.5" rx="4.75" ry="1.8" fill="#f0a030" stroke="#e8c878" stroke-width="1.1"/><path d="M819.5 171 C819.5 173 829 173 829 171 M819.5 174 C819.5 176 829 176 829 174" fill="none" stroke="#e8c878" stroke-width="1.1"/><path d="M838.90 165.50 L842.40 169.50 L845.90 165.50" fill="none" stroke="#fff" stroke-width="1.3" stroke-linecap="round" stroke-linejoin="round"/><circle cx="864.2" cy="161.8" r="3.2" fill="none" stroke="#d0d0d0" stroke-width="1.3"/><circle cx="875.5" cy="172.3" r="3.2" fill="none" stroke="#d0d0d0" stroke-width="1.3"/><path d="M876.5 158 L865 176.2" stroke="#d0d0d0" stroke-width="1.3"/><path d="M903 159.5 C906 159.5 908 162 907.5 165.5 C907 169.5 904 173 898.5 175 L898 174 C901.5 172 903 170 903.5 168.5 C900.5 168.5 898.5 166.5 898.5 164 C898.5 161.5 900.5 159.5 903 159.5 Z" fill="#d0d0d0"/><path d="M938 162.5 H928 M931 159.2 L927.8 162.5 L931 165.8" fill="none" stroke="#3d9ae0" stroke-width="1.4"/><path d="M959 171.5 H969.5 M966.2 168.2 L969.5 171.5 L966.2 174.8" fill="none" stroke="#3d9ae0" stroke-width="1.4"/><rect x="1032.7" y="112.5" width="35" height="27.5" fill="none" stroke="#b8b8b8" stroke-width="1.5"/><path d="M1038.6 112.5 V140 M1050 112.5 V140 M1059.5 112.5 V140 M1032.7 121.6 H1067.7 M1032.7 130.8 H1067.7" stroke="#b8b8b8" stroke-width="1.5"/><rect x="1038.6" y="112.5" width="16.4" height="9" fill="#d42a1e"/><rect x="1038.6" y="130.8" width="19" height="9.2" fill="#d42a1e"/><rect x="1038.6" y="122.6" width="11" height="7.5" fill="#1a6fc6" stroke="#5aaaf0" stroke-width="0.8"/><path d="M1038.6 112.5 V140" stroke="#f06060" stroke-width="0.8"/><path d="M1083.50 176.50 L1087.00 180.50 L1090.50 176.50" fill="none" stroke="#fff" stroke-width="1.3" stroke-linecap="round" stroke-linejoin="round"/><path d="M1116 112.8 H1150.3 V139.2 H1116 Z M1126.9 112.8 V139.2 M1138.4 112.8 V139.2 M1116 121.8 H1150.3 M1116 130.3 H1150.3" fill="none" stroke="#c0c0c0" stroke-width="1.5"/><rect x="1127.3" y="122.2" width="23.4" height="17.4" fill="#0063b1" stroke="#7cc0f0" stroke-width="1.1"/><path d="M1138.4 122.2 V139.6 M1127.3 130.3 H1150.7" stroke="#7cc0f0" stroke-width="1"/><path d="M1152 122.3 L1136.5 136" stroke="#292929" stroke-width="6.5" stroke-linecap="round"/><path d="M1139.9 137.3 C1139.4 143.3 1131.4 147.3 1123.9 142.3 C1128.4 142.3 1129.9 140.3 1130.9 138.3 C1132.9 135.3 1136.9 134.60000000000002 1139.9 137.3 Z" fill="#292929" stroke="#292929" stroke-width="3"/><path d="M1152 122.3 L1136.5 136" stroke="#d0d0d0" stroke-width="3.8" stroke-linecap="round"/><path d="M1152 122.3 L1136.5 136" stroke="#292929" stroke-width="1.4" stroke-linecap="round"/><path d="M1139.9 137.3 C1139.4 143.3 1131.4 147.3 1123.9 142.3 C1128.4 142.3 1129.9 140.3 1130.9 138.3 C1132.9 135.3 1136.9 134.60000000000002 1139.9 137.3 Z" fill="#0063b1" stroke="#7cc0f0" stroke-width="1"/><path d="M1147.50 176.50 L1151.00 180.50 L1154.50 176.50" fill="none" stroke="#fff" stroke-width="1.3" stroke-linecap="round" stroke-linejoin="round"/><path d="M1181 112.8 H1214.9 V139.2 H1181 Z M1187.2 112.8 V139.2 M1208.75 112.8 V139.2 M1181 119 H1214.9 M1181 132.75 H1214.9" fill="none" stroke="#c0c0c0" stroke-width="1.5"/><rect x="1187.4" y="119" width="21.4" height="13.8" fill="#0063b1" stroke="#7cc0f0" stroke-width="1.1"/><path d="M1216.8 122.6 L1202.4 136" stroke="#292929" stroke-width="6.5" stroke-linecap="round"/><path d="M1204.9 137.5 C1204.4 143.5 1196.4 147.5 1188.9 142.5 C1193.4 142.5 1194.9 140.5 1195.9 138.5 C1197.9 135.5 1201.9 134.8 1204.9 137.5 Z" fill="#292929" stroke="#292929" stroke-width="3"/><path d="M1216.8 122.6 L1202.4 136" stroke="#d0d0d0" stroke-width="3.8" stroke-linecap="round"/><path d="M1216.8 122.6 L1202.4 136" stroke="#292929" stroke-width="1.4" stroke-linecap="round"/><path d="M1204.9 137.5 C1204.4 143.5 1196.4 147.5 1188.9 142.5 C1193.4 142.5 1194.9 140.5 1195.9 138.5 C1197.9 135.5 1201.9 134.8 1204.9 137.5 Z" fill="#0063b1" stroke="#7cc0f0" stroke-width="1"/><path d="M1214.00 176.50 L1217.50 180.50 L1221.00 176.50" fill="none" stroke="#fff" stroke-width="1.3" stroke-linecap="round" stroke-linejoin="round"/><path d="M1255.8 119.5 V112.6 H1290.2 V139.1 H1255.8 V130.8 M1267.4 112.6 V139.1 M1278.6 112.6 V139.1" fill="none" stroke="#c0c0c0" stroke-width="1.5"/><rect x="1261.5" y="121.3" width="31" height="9" fill="#0063b1" stroke="#7cc0f0" stroke-width="1.2"/><path d="M1267.4 121.3 V130.3 M1278.6 121.3 V130.3" stroke="#7cc0f0" stroke-width="1"/><path d="M1261.8 117.3 L1253.8 125.6 L1261.8 133.8 M1254 125.6 H1270" fill="none" stroke="#3aa0ea" stroke-width="1.5"/><path d="M1262 123.8 H1267 M1262 127.4 H1267" stroke="#1a1a1a" stroke-width="0.8" opacity="0.6"/><path d="M1268.75 177.00 L1272.50 181.00 L1276.25 177.00" fill="none" stroke="#fff" stroke-width="1.3" stroke-linecap="round" stroke-linejoin="round"/><path d="M1314 121 H1309.8 V112.6 H1344.3 V118 M1314 130.6 H1309.8 V139.1 H1344.3 V135 M1321.2 112.6 V121 M1321.2 130.6 V139.1 M1332.6 112.6 V118.5 M1332.6 135 V139.1" fill="none" stroke="#c0c0c0" stroke-width="1.5"/><path d="M1314.8 121.6 H1331.6 L1335 125.8 L1331.6 130.2 H1314.8 Z" fill="#0063b1" stroke="#7cc0f0" stroke-width="1.2"/><path d="M1326.3 121.6 V130.2" stroke="#7cc0f0" stroke-width="1"/><path d="M1331.8 119.5 L1346 133.8 M1346 119.5 L1331.8 133.8" stroke="#e84c4c" stroke-width="1.5"/><path d="M1322.65 177.00 L1326.40 181.00 L1330.15 177.00" fill="none" stroke="#fff" stroke-width="1.3" stroke-linecap="round" stroke-linejoin="round"/><path d="M1363.9 112.6 H1398.3 V139.1 H1363.9 Z M1372.8 112.6 V139.1 M1389 112.6 V139.1 M1363.9 121.5 H1398.3 M1363.9 130.2 H1398.3" fill="none" stroke="#c0c0c0" stroke-width="1.5"/><rect x="1373" y="121.7" width="16" height="8.3" fill="#0063b1" stroke="#7cc0f0" stroke-width="1.2"/><path d="M1371.5 107.8 H1390.5" stroke="#3a98e0" stroke-width="1.6"/><path d="M1371.5 105.6 V110 M1390.5 105.6 V110" stroke="#3a98e0" stroke-width="1.5"/><path d="M1376.75 175.40 L1380.50 179.40 L1384.25 175.40" fill="none" stroke="#fff" stroke-width="1.3" stroke-linecap="round" stroke-linejoin="round"/><path d="M1450 110 V108.5 H1434.5 L1442 117 L1434.5 125.5 H1450 V124" fill="none" stroke="#c8c8c8" stroke-width="1.5"/><path d="M1533.25 115.50 L1537.00 119.50 L1540.75 115.50" fill="none" stroke="#fff" stroke-width="1.3" stroke-linecap="round" stroke-linejoin="round"/><rect x="1432.5" y="140.5" width="18.5" height="17" fill="none" stroke="#c8c8c8" stroke-width="1.4"/><path d="M1432.5 143 H1451" stroke="#c8c8c8" stroke-width="1.2"/><path d="M1441.7 146 V154 M1438.5 151 L1441.7 154 L1445 151" fill="none" stroke="#3d9ae0" stroke-width="1.4"/><path d="M1480.50 147.00 L1484.00 151.00 L1487.50 147.00" fill="none" stroke="#fff" stroke-width="1.3" stroke-linecap="round" stroke-linejoin="round"/><path d="M1432.7 182.9 L1437.5 177.8 L1444.8 185.2 L1439.6 190.2 Z" fill="#a43cb8"/><path d="M1444.6 172.2 L1451 178.5 L1439.6 190 L1433 183 Z M1437.5 177.8 L1444.8 185.2" fill="none" stroke="#c86ad8" stroke-width="1.3" stroke-linejoin="round"/><path d="M1495.50 179.00 L1499.00 183.00 L1502.50 179.00" fill="none" stroke="#fff" stroke-width="1.3" stroke-linecap="round" stroke-linejoin="round"/><path d="M1574.5 117.5 H1594.5 V120 L1586.5 128.5 V137 H1582.5 V128.5 L1574.5 120 Z" fill="none" stroke="#c8c8c8" stroke-width="1.4" stroke-linejoin="round"/><path d="M1590.50 176.00 L1594.00 180.00 L1597.50 176.00" fill="none" stroke="#fff" stroke-width="1.3" stroke-linecap="round" stroke-linejoin="round"/><circle cx="1638.5" cy="121" r="12.3" fill="none" stroke="#c8c8c8" stroke-width="1.4"/><path d="M1629.7 129.8 L1615.5 144.5" stroke="#c8c8c8" stroke-width="1.5"/><path d="M1651.50 176.00 L1655.00 180.00 L1658.50 176.00" fill="none" stroke="#fff" stroke-width="1.3" stroke-linecap="round" stroke-linejoin="round"/><rect x="1695" y="109" width="35" height="34" fill="none" stroke="#c43e1c" stroke-width="1.8"/><rect x="1699" y="113" width="12" height="12" fill="none" stroke="#c43e1c" stroke-width="1.6"/><rect x="1714" y="113" width="12" height="12" fill="none" stroke="#c43e1c" stroke-width="1.6"/><rect x="1699" y="128" width="12" height="12" fill="none" stroke="#c43e1c" stroke-width="1.6"/><rect x="1714" y="128" width="12" height="12" fill="none" stroke="#c43e1c" stroke-width="1.6"/><rect x="1769.5" y="106.5" width="39" height="39" fill="none" stroke="#c8c8c8" stroke-width="1.5"/><rect x="1770" y="107" width="38" height="4" fill="#8a8a8a"/><path d="M1770 114 H1808 M1770 124 H1808 M1770 134 H1808 M1782 134 V146 M1795 134 V146" stroke="#b0b0b0" stroke-width="1.1"/><circle cx="1787.5" cy="123" r="12" fill="#292929" stroke="#d0d0d0" stroke-width="1.5"/><path d="M1796 131.5 L1808 144" stroke="#d0d0d0" stroke-width="1.8"/><rect x="1780.5" y="120" width="4" height="7.5" fill="#8a8a8a"/><rect x="1784.5" y="115" width="4.5" height="12.5" fill="#d8d8d8"/><rect x="1789.5" y="118" width="4" height="9.5" fill="#1a7ad8"/><path d="M118.50 245.25 L124.00 250.75 L129.50 245.25" fill="none" stroke="#fff" stroke-width="1.4" stroke-linecap="round" stroke-linejoin="round"/><rect x="148" y="241" width="2.5" height="2.5" fill="#fff"/><rect x="148" y="246" width="2.5" height="2.5" fill="#fff"/><rect x="148" y="251" width="2.5" height="2.5" fill="#fff"/><path d="M170.7 240 L184.7 254 M184.7 240 L170.7 254" stroke="#7a7a7a" stroke-width="1.3"/><path d="M198.5 246.5 L204.5 253 L217.5 240.5" fill="none" stroke="#7a7a7a" stroke-width="1.3"/><path d="M1891.90 242.75 L1898.40 249.25 L1904.90 242.75" fill="none" stroke="#fff" stroke-width="1.4" stroke-linecap="round" stroke-linejoin="round"/><path d="M33 274.5 V291.5 H15.6 Z" fill="#6a6a6a"/><path d="M1907.5 276 L1913 285 H1902 Z" fill="#9b9b9b" stroke="#9b9b9b" stroke-width="1" stroke-linejoin="round"/><path d="M1907.5 1070 L1913 1061 H1902 Z" fill="#9b9b9b" stroke="#9b9b9b" stroke-width="1" stroke-linejoin="round"/><path d="M1182 1092.5 L1191 1087 V1098 Z" fill="#9b9b9b" stroke="#9b9b9b" stroke-width="1" stroke-linejoin="round"/><path d="M1891 1092.5 L1882 1087 V1098 Z" fill="#9b9b9b" stroke="#9b9b9b" stroke-width="1" stroke-linejoin="round"/><rect x="1154.8" y="1087.3" width="2.6" height="2.6" fill="#fff"/><rect x="1154.8" y="1092.2" width="2.6" height="2.6" fill="#fff"/><rect x="1154.8" y="1097.2" width="2.6" height="2.6" fill="#fff"/><path d="M39.5 1086.5 L32 1092.3 L39.5 1098" fill="none" stroke="#9a9a9a" stroke-width="1.2"/><path d="M72 1086.5 L79.5 1092.3 L72 1098" fill="none" stroke="#9a9a9a" stroke-width="1.2"/><path d="M278.3 1085 V1099 M271.3 1092 H285.3" stroke="#e6e6e6" stroke-width="1.5"/><rect x="1564" y="1118" width="17" height="16.8" fill="#e6e6e6"/><rect x="1566" y="1119.8" width="2.7" height="2.7" fill="#2a2a2a"/><rect x="1566" y="1124.9" width="2.7" height="2.7" fill="#2a2a2a"/><rect x="1566" y="1130" width="2.7" height="2.7" fill="#2a2a2a"/><rect x="1571.1" y="1119.8" width="2.7" height="2.7" fill="#2a2a2a"/><rect x="1571.1" y="1124.9" width="2.7" height="2.7" fill="#2a2a2a"/><rect x="1571.1" y="1130" width="2.7" height="2.7" fill="#2a2a2a"/><rect x="1576.2" y="1119.8" width="2.7" height="2.7" fill="#2a2a2a"/><rect x="1576.2" y="1124.9" width="2.7" height="2.7" fill="#2a2a2a"/><rect x="1576.2" y="1130" width="2.7" height="2.7" fill="#2a2a2a"/><rect x="1614.8" y="1118.8" width="16.4" height="15.4" fill="none" stroke="#e0e0e0" stroke-width="1.7"/><rect x="1618.5" y="1121.6" width="9.2" height="10" fill="none" stroke="#e0e0e0" stroke-width="1.2"/><path d="M1620 1124.5 H1626.2 M1620 1126.6 H1626.2 M1620 1128.7 H1626.2" stroke="#a0a0a0" stroke-width="0.9"/><rect x="1664.8" y="1118.8" width="16.4" height="15.4" fill="none" stroke="#e0e0e0" stroke-width="1.7"/><path d="M1664.8 1127 H1675.8 V1118.8 M1670.2 1118.8 V1127" fill="none" stroke="#e0e0e0" stroke-width="1.5"/><rect x="1705" y="1126.2" width="10.5" height="1.4" fill="#d0d0d0"/><rect x="1721" y="1127" width="125" height="1" fill="#9a9a9a"/><rect x="1781" y="1120" width="6.5" height="14.5" rx="1" fill="#9a9a9a"/><path d="M1857.2 1120.5 V1134 M1850.5 1127.2 H1864" stroke="#d0d0d0" stroke-width="1.4"/></svg>
<div class="t" style="left:158.50px;top:159.96px;font-size:16px;color:#d6d6d6;font-weight:bold;">B</div>
<div class="t" style="left:190.50px;top:157.11px;font-size:17px;color:#d6d6d6;font-style:italic;font-family:'Liberation Serif',serif;">I</div>
<div class="t" style="left:220.50px;top:157.76px;font-size:16px;color:#d6d6d6;transform:scaleX(1.0385);">U</div>
<div class="t" style="left:544.50px;top:117.42px;font-size:12.5px;color:#c8c8c8;transform:rotate(-45deg);transform-origin:7px 6px;">ab</div>
<div class="t" style="left:624.80px;top:114.85px;font-size:14px;color:#c8c8c8;transform:scaleX(0.9632);">ab</div>
<div class="t" style="left:624.80px;top:123.95px;font-size:14px;color:#c8c8c8;transform:scaleX(0.8857);">c</div>
<div class="t" style="left:940.50px;top:155.62px;font-size:12.5px;color:#d0d0d0;transform:scaleX(0.8630);">0</div>
<div class="t" style="left:930.00px;top:165.62px;font-size:12.5px;color:#d0d0d0;transform:scaleX(0.9323);">.00</div>
<div class="t" style="left:962.40px;top:155.62px;font-size:12.5px;color:#d0d0d0;transform:scaleX(0.9208);">.00</div>
<div class="t" style="left:968.50px;top:165.62px;font-size:12.5px;color:#d0d0d0;transform:scaleX(0.9209);">.0</div>
<div class="t" style="left:1559.30px;top:107.22px;font-size:21px;color:#3d9ae0;transform:scaleX(0.8924);">A</div>
<div class="t" style="left:1559.50px;top:124.72px;font-size:21px;color:#c8c8c8;transform:scaleX(0.9121);">Z</div>
<div class="t" style="left:228.50px;top:237.42px;font-size:19px;color:#d8d8d8;font-family:'Liberation Serif',serif;font-style:italic;">fx</div>
<div class="t" style="left:160.50px;top:22.95px;font-size:14px;color:#fff;transform:scaleX(0.9503);">Off</div>
</body></html>
